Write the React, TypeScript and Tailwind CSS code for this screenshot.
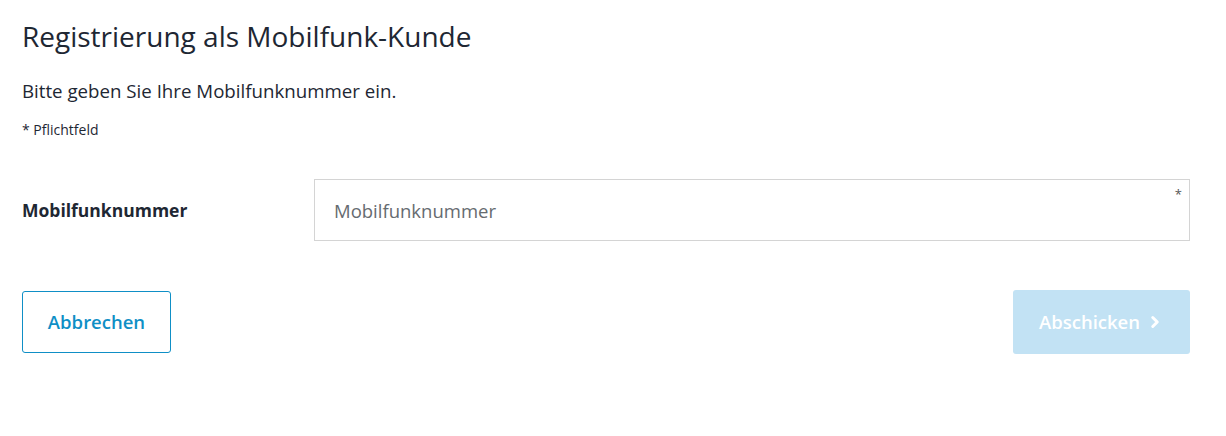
import { ChevronRight } from "lucide-react";

export default function App() {
  return (
    <div className="min-h-screen bg-white pl-[22px] pr-[36px] pt-[18px] font-['Open_Sans',sans-serif] text-[#1e2733]">
      <h1 className="text-[28px] leading-[36px] font-normal">Registrierung als Mobilfunk-Kunde</h1>
      <p className="mt-[25px] text-[18.7px] leading-[24px]">Bitte geben Sie Ihre Mobilfunknummer ein.</p>
      <p className="mt-[18px] text-[14px] leading-[18px]">* Pflichtfeld</p>

      <div className="mt-[40px] flex items-center">
        <label className="w-[292px] text-[17.5px] font-bold">Mobilfunknummer</label>
        <div className="relative flex-1">
          <input
            placeholder="Mobilfunknummer"
            className="h-[62px] w-full border border-[#d4d4d4] px-[19px] text-[18.5px] text-[#1e2733] placeholder:text-[#666b70] outline-none"
          />
          <span className="absolute right-[8px] top-[6px] text-[13px] text-[#555]">*</span>
        </div>
      </div>

      <div className="mt-[49px] flex items-center justify-between">
        <button className="h-[62px] w-[149px] rounded-[3px] border border-[#0f8fc6] text-[18.5px] font-semibold text-[#0f8fc6]">
          Abbrechen
        </button>
        <button className="flex h-[64px] w-[177px] items-center justify-center gap-[6px] rounded-[3px] bg-[#c2e2f4] text-[18.5px] font-semibold text-white">
          Abschicken
          <ChevronRight className="h-[18px] w-[18px]" strokeWidth={4} />
        </button>
      </div>
    </div>
  );
}
